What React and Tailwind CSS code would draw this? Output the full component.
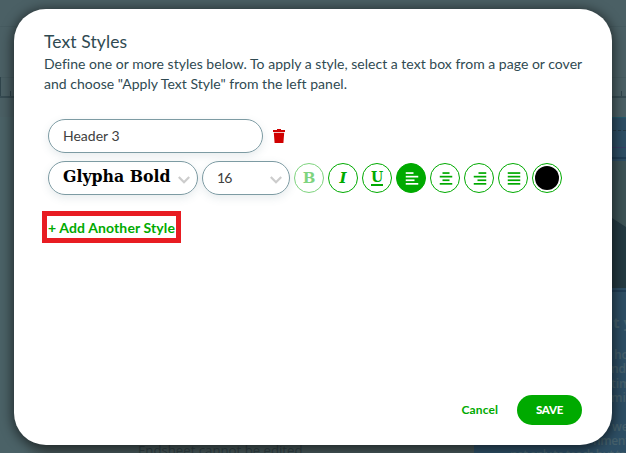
import React from "react";

const backdropLines = [
  { text: "ho", style: "pl-[140px] pt-[56px]" },
  { text: "nd l", style: "pl-[137px]" },
  { text: "tim", style: "pl-[137px]" },
  { text: "mih", style: "pl-[137px]" },
  { text: "we", style: "pl-[138px] pt-[14px]" },
  { text: "nment", style: "pl-[119px] -tracking-[0.4px]" },
  { text: "not only to teach but to i", style: "pl-[36px] tracking-[-0.85px]" },
];

const alignments = [
  { name: "left", bars: [[0, 8], [0, 13], [0, 9], [0, 13]] },
  { name: "center", bars: [[3, 7], [0, 13], [3, 7], [0, 13]] },
  { name: "right", bars: [[5, 8], [0, 13], [4, 9], [0, 13]] },
  { name: "justify", bars: [[0, 13], [0, 13], [0, 13], [0, 13]] },
];

const AlignIcon = ({ bars }) => (
  <svg
    width="13"
    height="13"
    viewBox="0 0 13 13"
    fill="currentColor"
    className="translate-x-[0.5px]"
  >
    {bars.map(([x, width], i) => (
      <rect key={i} x={x} y={0.2 + i * 3.6} width={width} height="1.7" />
    ))}
  </svg>
);

const Chevron = () => (
  <svg
    width="12"
    height="8"
    viewBox="0 0 12 8"
    fill="none"
    stroke="#cccccc"
    strokeWidth="2.2"
  >
    <path d="M0.8 1 L6 6.2 L11.2 1" />
  </svg>
);

const TrashIcon = () => (
  <svg width="12" height="14" viewBox="0 0 12 14" fill="#d00000">
    <path d="M0 1h4V0h4v1h4v2H0zM0.8 3.8h10.4L10.4 14H1.6z" />
  </svg>
);

const RoundButton = ({ label, className = "", children }) => (
  <button
    aria-label={label}
    className={`flex h-[30px] w-[30px] shrink-0 items-center justify-center rounded-full border border-[#00aa00] ${className}`}
  >
    {children}
  </button>
);

const Backdrop = () => (
  <div className="flex h-full flex-col overflow-hidden bg-[#4b6065]">
    <div className="h-[27px] shrink-0 border-b border-[#465b60]" />
    <div className="h-[51px] shrink-0 border-b border-[#465b60]" />
    <div className="flex h-[20px] shrink-0 items-end justify-between border-b-2 border-[#374c53]">
      <div className="flex items-end gap-[9px]">
        <div className="h-[19px] w-px bg-[#30454c]" />
        <div className="h-[5px] w-px bg-[#30454c]" />
      </div>
      <div className="mr-[4px] h-[5px] w-px bg-[#30454c]" />
    </div>
    <div className="mt-[19px] flex grow">
      <div className="flex w-[474px] shrink-0 flex-col justify-end overflow-hidden bg-gradient-to-r from-[#4b6267] from-5% to-[#455557] to-10%">
        <p className="h-[12px] pl-[138px] font-['Open_Sans',sans-serif] text-[13.2px] leading-[18px] whitespace-nowrap text-[#303f43]">
          Endsheet cannot be edited
        </p>
      </div>
      <div className="flex h-[336px] w-[152px] shrink-0 flex-col overflow-hidden border-t border-[#245c6d] bg-[#2d4e64]">
        <div className="mt-[12px] border-b border-dashed border-[#253b48]" />
        <div className="mt-[16px] border-b border-[#393e65]" />
        <div className="mt-[9px] h-[2px] shrink-0 bg-[#203e55]" />
        <svg
          width="152"
          height="127"
          viewBox="0 0 152 127"
          className="mt-[2px] shrink-0"
        >
          <rect width="152" height="127" fill="#3d5356" />
          <path d="M0 -20 L138 57 L152 66 V127 H0z" fill="#243a42" />
        </svg>
        <div className="mt-[2px] h-[2px] shrink-0 bg-[#203e55]" />
        <div className="h-0 overflow-visible pl-[139px] font-['Open_Sans',sans-serif] text-[15px] leading-[60px] font-bold whitespace-nowrap text-[#45616d]">
          t y
        </div>
        <div className="font-['Open_Sans',sans-serif] text-[12px] leading-[14.4px] font-semibold whitespace-nowrap text-[#45606b]">
          {backdropLines.map((line) => (
            <p key={line.text} className={line.style}>
              {line.text}
            </p>
          ))}
        </div>
      </div>
    </div>
  </div>
);

const App = () => {
  return (
    <div className="relative h-[453px] w-[626px] overflow-hidden">
      <Backdrop />
      <div className="absolute top-[9px] left-[14px] flex h-[436px] w-[598px] flex-col rounded-[32px] bg-white px-[30px] pt-[22px] pb-[20px] font-['Lato',sans-serif] shadow-[0_2px_12px_2px_rgba(0,0,0,0.55)]">
        <h1 className="text-[17.5px] leading-[21px] tracking-[0.1px] whitespace-nowrap text-[#2f4a52]">
          Text Styles
        </h1>
        <p className="pt-[2px] text-[14px] leading-[20px] tracking-[0.02px] whitespace-nowrap text-[#2f4a52]">
          Define one or more styles below. To apply a style, select a text box
          from a page or cover
          <br />
          and choose "Apply Text Style" from the left panel.
        </p>

        <div className="mt-[25px] flex items-center gap-[10px] pl-[4px]">
          <div className="flex h-[34px] w-[215px] items-center rounded-full border border-[#7d9ba3] pb-[2px] pl-[14px] text-[14px] text-[#404040] shadow-[0_3px_8px_rgba(80,110,130,0.14)]">
            Header 3
          </div>
          <TrashIcon />
        </div>

        <div className="mt-[8px] flex items-center pl-[4px]">
          <div className="flex h-[34px] w-[150px] items-center justify-between rounded-full border border-[#7d9ba3] pr-[7px] pl-[14px] shadow-[0_3px_8px_rgba(80,110,130,0.14)]">
            <span className="pb-[4px] font-['DejaVu_Serif',serif] text-[17.5px] leading-[20px] font-bold whitespace-nowrap text-black [font-stretch:condensed]">
              Glypha Bold
            </span>
            <span className="pt-[3px]">
              <Chevron />
            </span>
          </div>
          <div className="ml-[4px] flex h-[34px] w-[88px] items-center justify-between rounded-full border border-[#7d9ba3] pr-[7px] pl-[14px] shadow-[0_3px_8px_rgba(80,110,130,0.14)]">
            <span className="pb-[2px] text-[14px] tracking-[-0.9px] text-[#404040]">
              16
            </span>
            <span className="pt-[3px]">
              <Chevron />
            </span>
          </div>
          <div className="ml-[4px] flex gap-[4px] font-['DejaVu_Serif',serif] text-[15px] font-bold text-[#00aa00]">
            <RoundButton label="Bold" className="opacity-50">
              B
            </RoundButton>
            <RoundButton label="Italic">
              <span className="italic">I</span>
            </RoundButton>
            <RoundButton label="Underline">
              <span className="border-b-2 border-[#00aa00] text-[14px] leading-[13px]">
                U
              </span>
            </RoundButton>
            {alignments.map(({ name, bars }) => (
              <RoundButton
                key={name}
                label={`Align ${name}`}
                className={name === "left" ? "bg-[#00aa00] text-white" : ""}
              >
                <AlignIcon bars={bars} />
              </RoundButton>
            ))}
            <RoundButton label="Color">
              <span className="h-[24px] w-[24px] rounded-full bg-black" />
            </RoundButton>
          </div>
        </div>

        <button className="mt-[16px] -ml-[2px] flex h-[32px] w-[139px] items-center self-start border-5 border-[#e81c22] whitespace-nowrap text-[#00aa00]">
          <span className="pl-px text-[14px] font-bold tracking-[0.12px]">
            + Add Another Style
          </span>
        </button>

        <div className="mt-auto flex items-center justify-end gap-[19px]">
          <button className="text-[12px] font-bold tracking-[0.1px] text-[#00aa00]">
            Cancel
          </button>
          <button className="h-[30px] w-[65px] rounded-full bg-[#00aa00] pb-px text-[11.5px] font-black tracking-[-0.3px] text-white">
            SAVE
          </button>
        </div>
      </div>
    </div>
  );
};

export default App;
